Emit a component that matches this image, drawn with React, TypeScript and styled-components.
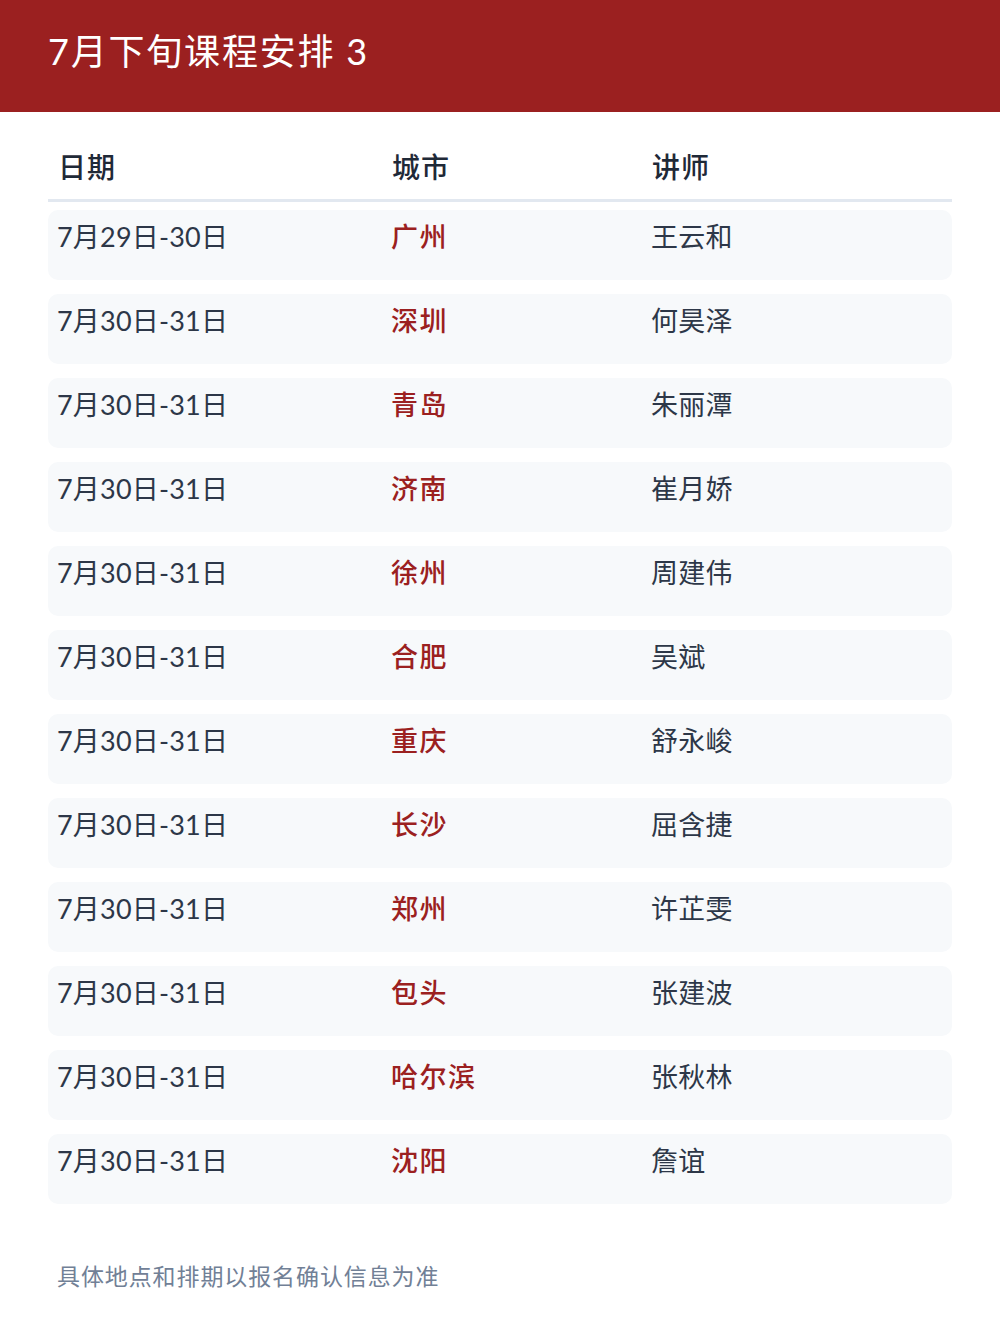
import React from "react";
import styled, { createGlobalStyle } from "styled-components";

const Global = createGlobalStyle`
  html, body { margin: 0; padding: 0; background: #ffffff; }
  body { font-family: Lato, "Noto Sans CJK SC", sans-serif; }
`;

const Page = styled.div`
  width: 1000px;
  min-height: 1320px;
  background: #ffffff;
`;

const Banner = styled.header`
  height: 112px;
  background: #9b2020;
  display: flex;
  align-items: center;
  padding: 0 48px;
  box-sizing: border-box;
`;

const Title = styled.h1`
  margin: -14px 0 0 0;
  color: #ffffff;
  font-size: 36px;
  font-weight: 400;
  letter-spacing: 1.8px;
`;

const Body = styled.main`
  padding: 0 48px;
`;

const HeadRow = styled.div`
  display: grid;
  grid-template-columns: 334px 260px 1fr;
  padding-top: 37px;
  padding-bottom: 14px;
  border-bottom: 3px solid #e2e8f0;
`;

const HeadCell = styled.div`
  padding-left: 10px;
  font-size: 28px;
  font-weight: 500;
  color: #1f2937;
  line-height: 36px;
  letter-spacing: 1px;
`;

const List = styled.div`
  display: flex;
  flex-direction: column;
  gap: 14px;
  margin-top: 8px;
`;

const Row = styled.div`
  display: grid;
  grid-template-columns: 334px 260px 1fr;
  height: 70px;
  background: #f7f9fb;
  border-radius: 10px;
`;

const Cell = styled.div<{ $accent?: boolean }>`
  padding: 10px 0 0 9px;
  font-size: 27px;
  line-height: 34px;
  color: ${(p) => (p.$accent ? "#9b2020" : "#2d3748")};
  font-weight: ${(p) => (p.$accent ? 500 : 400)};
  letter-spacing: ${(p) => (p.$accent ? "1.5px" : "0.2px")};
`;

const Note = styled.p`
  margin: 54px 0 0 9px;
  font-size: 23px;
  letter-spacing: 0.9px;
  color: #718096;
`;

const rows: [string, string, string][] = [
  ["7月29日-30日", "广州", "王云和"],
  ["7月30日-31日", "深圳", "何昊泽"],
  ["7月30日-31日", "青岛", "朱丽潭"],
  ["7月30日-31日", "济南", "崔月娇"],
  ["7月30日-31日", "徐州", "周建伟"],
  ["7月30日-31日", "合肥", "吴斌"],
  ["7月30日-31日", "重庆", "舒永峻"],
  ["7月30日-31日", "长沙", "屈含捷"],
  ["7月30日-31日", "郑州", "许芷雯"],
  ["7月30日-31日", "包头", "张建波"],
  ["7月30日-31日", "哈尔滨", "张秋林"],
  ["7月30日-31日", "沈阳", "詹谊"],
];

export default function App() {
  return (
    <Page>
      <Global />
      <Banner>
        <Title>7月下旬课程安排 3</Title>
      </Banner>
      <Body>
        <HeadRow>
          <HeadCell>日期</HeadCell>
          <HeadCell>城市</HeadCell>
          <HeadCell>讲师</HeadCell>
        </HeadRow>
        <List>
          {rows.map((r, i) => (
            <Row key={i}>
              <Cell>{r[0]}</Cell>
              <Cell $accent>{r[1]}</Cell>
              <Cell>{r[2]}</Cell>
            </Row>
          ))}
        </List>
        <Note>具体地点和排期以报名确认信息为准</Note>
      </Body>
    </Page>
  );
}
